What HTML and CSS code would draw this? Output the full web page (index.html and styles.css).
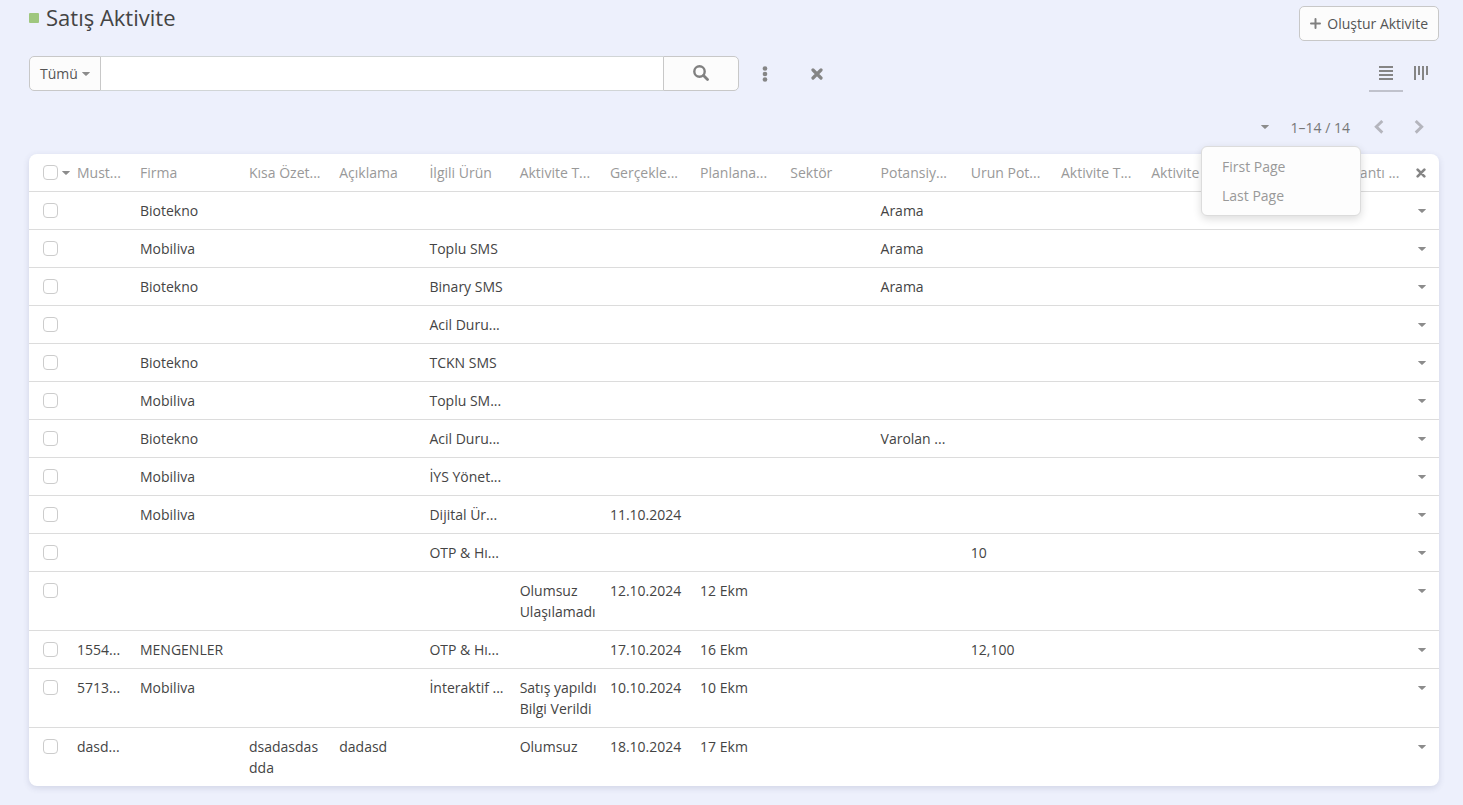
FILE: index.html
```html
<!DOCTYPE html>
<html lang="tr">
<head>
<meta charset="utf-8">
<meta name="viewport" content="width=device-width, initial-scale=1">
<title>Satış Aktivite</title>
<link rel="stylesheet" href="styles.css">
</head>
<body>
<svg class="sprite" aria-hidden="true">
  <symbol id="caret" viewBox="0 0 8 4"><path d="M.5 0h7q.7 0 .3.5L4.6 3.6q-.6.6-1.200 0L.2.5Q-.2 0 .5 0z"/></symbol>
  <symbol id="cross" viewBox="0 0 12 12"><path d="M2 2l8 8M10 2l-8 8" fill="none" stroke="currentColor" stroke-width="3.200" stroke-linecap="round"/></symbol>
</svg>
<main class="page">
  <header class="page-header">
    <h1 class="title"><span class="title-mark"></span>Satış Aktivite</h1>
    <button class="btn create" type="button"><svg width="11" height="11" viewBox="0 0 11 11" aria-hidden="true"><path d="M5.500 1v9M1 5.500h9" fill="none" stroke="#808080" stroke-width="2" stroke-linecap="round"/></svg>Oluştur Aktivite</button>
  </header>

  <div class="search-row">
    <form class="search-group" role="search">
      <button class="btn filter" type="button">Tümü<svg class="caret" aria-hidden="true"><use href="#caret"/></svg></button>
      <input class="search-input" type="text" aria-label="Ara">
      <button class="btn search-btn" type="button" aria-label="Ara"><svg width="16" height="17" viewBox="0 0 16 17" fill="none" stroke="currentColor" aria-hidden="true"><circle cx="6.500" cy="6.500" r="5.200" stroke-width="2.400"/><path d="M10.500 10.500L14.500 14.500" stroke-width="2.800" stroke-linecap="round"/></svg></button>
    </form>
    <button class="icon-btn tool" type="button" aria-label="Menü"><svg width="6" height="16" viewBox="0 0 6 16" fill="currentColor" aria-hidden="true"><circle cx="3" cy="2.500" r="2.300"/><circle cx="3" cy="8" r="2.300"/><circle cx="3" cy="13.500" r="2.300"/></svg></button>
    <button class="icon-btn tool" type="button" aria-label="Temizle"><svg width="12" height="12" aria-hidden="true"><use href="#cross"/></svg></button>
    <div class="views">
      <button class="icon-btn view active" type="button" aria-label="Liste"><svg width="14" height="14" viewBox="0 0 14 14" fill="currentColor" aria-hidden="true"><path d="M0 0h14v2H0zM0 4h14v2H0zM0 8h14v2H0zM0 12h14v2H0z"/></svg></button>
      <button class="icon-btn view" type="button" aria-label="Kanban"><svg width="14" height="14" viewBox="0 0 14 14" fill="currentColor" aria-hidden="true"><path d="M0 0h2v14H0zM4 0h2v9H4zM8 0h2v14H8zM12 0h2v9h-2z"/></svg></button>
    </div>
  </div>

  <nav class="pagination" aria-label="Sayfalama">
    <button class="icon-btn page-menu-btn" type="button" aria-label="Sayfa menüsü"><svg class="caret" aria-hidden="true"><use href="#caret"/></svg></button>
    <span class="page-count">1–14 / 14</span>
    <button class="icon-btn page-step" type="button" aria-label="Önceki"><svg width="10" height="14" viewBox="0 0 10 14" fill="none" stroke="currentColor" stroke-width="2.900" aria-hidden="true"><path d="M8.300 1L2.300 6.800l6 5.800"/></svg></button>
    <button class="icon-btn page-step" type="button" aria-label="Sonraki"><svg width="10" height="14" viewBox="0 0 10 14" fill="none" stroke="currentColor" stroke-width="2.900" aria-hidden="true"><path d="M1.700 1l6 5.800-6 5.800"/></svg></button>
    <ul class="page-menu">
      <li><a href="#first">First Page</a></li>
      <li><a href="#last">Last Page</a></li>
    </ul>
  </nav>

  <div class="panel">
    <table class="list">
      <colgroup><col class="col-check"><col class="col-no"><col class="col-firm"><col span="13"><col class="col-menu"></colgroup>
      <thead>
        <tr><th class="check"><div class="check-all"><input type="checkbox" aria-label="Tümünü seç"><svg class="caret" aria-hidden="true"><use href="#caret"/></svg></div></th><th>Must...</th><th>Firma</th><th>Kısa Özet...</th><th>Açıklama</th><th>İlgili Ürün</th><th>Aktivite T...</th><th>Gerçekle...</th><th>Planlana...</th><th>Sektör</th><th>Potansiy...</th><th>Urun Pot...</th><th>Aktivite T...</th><th>Aktivite</th><th></th><th>Toplantı ...</th><th class="menu"><button class="icon-btn" type="button" aria-label="Sütunlar"><svg width="10" height="10" aria-hidden="true"><use href="#cross"/></svg></button></th></tr>
      </thead>
      <tbody>
        <tr><td class="check"><input type="checkbox" aria-label="Seç"></td><td></td><td>Biotekno</td><td></td><td></td><td></td><td></td><td></td><td></td><td></td><td>Arama</td><td></td><td></td><td></td><td></td><td></td><td class="menu"><button class="icon-btn" type="button" aria-label="Eylemler"><svg class="caret" aria-hidden="true"><use href="#caret"/></svg></button></td></tr>
        <tr><td class="check"><input type="checkbox" aria-label="Seç"></td><td></td><td>Mobiliva</td><td></td><td></td><td>Toplu SMS</td><td></td><td></td><td></td><td></td><td>Arama</td><td></td><td></td><td></td><td></td><td></td><td class="menu"><button class="icon-btn" type="button" aria-label="Eylemler"><svg class="caret" aria-hidden="true"><use href="#caret"/></svg></button></td></tr>
        <tr><td class="check"><input type="checkbox" aria-label="Seç"></td><td></td><td>Biotekno</td><td></td><td></td><td>Binary SMS</td><td></td><td></td><td></td><td></td><td>Arama</td><td></td><td></td><td></td><td></td><td></td><td class="menu"><button class="icon-btn" type="button" aria-label="Eylemler"><svg class="caret" aria-hidden="true"><use href="#caret"/></svg></button></td></tr>
        <tr><td class="check"><input type="checkbox" aria-label="Seç"></td><td></td><td></td><td></td><td></td><td>Acil Duru...</td><td></td><td></td><td></td><td></td><td></td><td></td><td></td><td></td><td></td><td></td><td class="menu"><button class="icon-btn" type="button" aria-label="Eylemler"><svg class="caret" aria-hidden="true"><use href="#caret"/></svg></button></td></tr>
        <tr><td class="check"><input type="checkbox" aria-label="Seç"></td><td></td><td>Biotekno</td><td></td><td></td><td>TCKN SMS</td><td></td><td></td><td></td><td></td><td></td><td></td><td></td><td></td><td></td><td></td><td class="menu"><button class="icon-btn" type="button" aria-label="Eylemler"><svg class="caret" aria-hidden="true"><use href="#caret"/></svg></button></td></tr>
        <tr><td class="check"><input type="checkbox" aria-label="Seç"></td><td></td><td>Mobiliva</td><td></td><td></td><td>Toplu SM...</td><td></td><td></td><td></td><td></td><td></td><td></td><td></td><td></td><td></td><td></td><td class="menu"><button class="icon-btn" type="button" aria-label="Eylemler"><svg class="caret" aria-hidden="true"><use href="#caret"/></svg></button></td></tr>
        <tr><td class="check"><input type="checkbox" aria-label="Seç"></td><td></td><td>Biotekno</td><td></td><td></td><td>Acil Duru...</td><td></td><td></td><td></td><td></td><td>Varolan ...</td><td></td><td></td><td></td><td></td><td></td><td class="menu"><button class="icon-btn" type="button" aria-label="Eylemler"><svg class="caret" aria-hidden="true"><use href="#caret"/></svg></button></td></tr>
        <tr><td class="check"><input type="checkbox" aria-label="Seç"></td><td></td><td>Mobiliva</td><td></td><td></td><td>İYS Yönet...</td><td></td><td></td><td></td><td></td><td></td><td></td><td></td><td></td><td></td><td></td><td class="menu"><button class="icon-btn" type="button" aria-label="Eylemler"><svg class="caret" aria-hidden="true"><use href="#caret"/></svg></button></td></tr>
        <tr><td class="check"><input type="checkbox" aria-label="Seç"></td><td></td><td>Mobiliva</td><td></td><td></td><td>Dijital Ür...</td><td></td><td>11.10.2024</td><td></td><td></td><td></td><td></td><td></td><td></td><td></td><td></td><td class="menu"><button class="icon-btn" type="button" aria-label="Eylemler"><svg class="caret" aria-hidden="true"><use href="#caret"/></svg></button></td></tr>
        <tr><td class="check"><input type="checkbox" aria-label="Seç"></td><td></td><td></td><td></td><td></td><td>OTP &amp; Hı...</td><td></td><td></td><td></td><td></td><td></td><td>10</td><td></td><td></td><td></td><td></td><td class="menu"><button class="icon-btn" type="button" aria-label="Eylemler"><svg class="caret" aria-hidden="true"><use href="#caret"/></svg></button></td></tr>
        <tr><td class="check"><input type="checkbox" aria-label="Seç"></td><td></td><td></td><td></td><td></td><td></td><td>Olumsuz<br>Ulaşılamadı</td><td>12.10.2024</td><td>12 Ekm</td><td></td><td></td><td></td><td></td><td></td><td></td><td></td><td class="menu"><button class="icon-btn" type="button" aria-label="Eylemler"><svg class="caret" aria-hidden="true"><use href="#caret"/></svg></button></td></tr>
        <tr><td class="check"><input type="checkbox" aria-label="Seç"></td><td>1554...</td><td>MENGENLER</td><td></td><td></td><td>OTP &amp; Hı...</td><td></td><td>17.10.2024</td><td>16 Ekm</td><td></td><td></td><td>12,100</td><td></td><td></td><td></td><td></td><td class="menu"><button class="icon-btn" type="button" aria-label="Eylemler"><svg class="caret" aria-hidden="true"><use href="#caret"/></svg></button></td></tr>
        <tr><td class="check"><input type="checkbox" aria-label="Seç"></td><td>5713...</td><td>Mobiliva</td><td></td><td></td><td>İnteraktif ...</td><td>Satış yapıldı<br>Bilgi Verildi</td><td>10.10.2024</td><td>10 Ekm</td><td></td><td></td><td></td><td></td><td></td><td></td><td></td><td class="menu"><button class="icon-btn" type="button" aria-label="Eylemler"><svg class="caret" aria-hidden="true"><use href="#caret"/></svg></button></td></tr>
        <tr><td class="check"><input type="checkbox" aria-label="Seç"></td><td>dasd...</td><td></td><td>dsadasdas<br>dda</td><td>dadasd</td><td></td><td>Olumsuz</td><td>18.10.2024</td><td>17 Ekm</td><td></td><td></td><td></td><td></td><td></td><td></td><td></td><td class="menu"><button class="icon-btn" type="button" aria-label="Eylemler"><svg class="caret" aria-hidden="true"><use href="#caret"/></svg></button></td></tr>
      </tbody>
    </table>
  </div>
</main>
</body>
</html>
```
FILE: styles.css
```css
* { box-sizing: border-box; }

body {
  margin: 0;
  background: #edf0fc;
  color: #444;
  font: 14px/21px "Open Sans", "Noto Sans", sans-serif;
}

button, input { font: inherit; color: inherit; margin: 0; }

.sprite { display: none; }

.caret { width: 8px; height: 4px; fill: #8c8c8c; }

.page { padding: 6px 24px 16px 29px; }

.page-header {
  display: flex;
  justify-content: space-between;
  align-items: flex-start;
}

.title {
  display: flex;
  align-items: center;
  gap: 7px;
  margin: 0;
  font-size: 22px;
  font-weight: 400;
  line-height: 23px;
}

.title-mark {
  width: 10px;
  height: 10px;
  border-radius: 1px;
  background: #9fc77e;
}

.btn {
  display: flex;
  align-items: center;
  justify-content: center;
  height: 35px;
  padding: 0 10px;
  border: 1px solid #c8c8c8;
  border-radius: 5px;
  background: #fcfcfc;
  color: #555;
}

.create { gap: 6px; }

.search-row {
  display: flex;
  align-items: flex-start;
  margin-top: 15px;
}

.search-group {
  display: flex;
  width: calc(50% + 5px);
}

.filter {
  gap: 4px;
  border-radius: 5px 0 0 5px;
}

.search-input {
  flex: 1;
  min-width: 0;
  height: 35px;
  padding: 0 10px;
  border: 1px solid #d1d5d6;
  border-width: 1px 0;
  border-radius: 0;
  background: #fff;
  outline: 0;
}

.search-btn {
  width: 76px;
  border-radius: 0 5px 5px 0;
  color: #808080;
}

.icon-btn {
  display: flex;
  align-items: center;
  justify-content: center;
  padding: 0;
  border: 0;
  background: none;
  color: #858585;
}

.tool { width: 52px; height: 35px; }

.views {
  display: flex;
  gap: 1px;
  margin: 0 1px 0 auto;
}

.view {
  width: 34px;
  height: 36px;
  border-bottom: 2px solid transparent;
}

.active { border-color: #c0c2cc; }

.pagination {
  position: relative;
  display: flex;
  align-items: center;
  justify-content: flex-end;
  height: 62px;
  padding-top: 8px;
}

.page-menu-btn { width: 32px; height: 32px; }

.page-count { margin: 0 9px 0 10px; color: #777; }

.page-step { width: 40px; height: 32px; color: #b4b5bd; }

.page-menu {
  position: absolute;
  top: 54px;
  right: 78px;
  z-index: 1;
  width: 160px;
  margin: 0;
  padding: 5px 0;
  border: 1px solid #dcdcdc;
  border-radius: 6px;
  background: #fdfdfd;
  box-shadow: 0 3px 8px rgba(0, 0, 0, .14);
  list-style: none;
}

.page-menu a {
  display: block;
  padding: 4px 20px;
  color: #999;
  text-decoration: none;
}

.panel {
  border-radius: 8px;
  background: #fff;
  box-shadow: 0 2px 6px rgba(60, 70, 110, .16);
}

.list {
  width: 100%;
  table-layout: fixed;
  border-collapse: separate;
  border-spacing: 0;
}

.col-check { width: 41px; }
.col-no { width: 63px; }
.col-firm { width: 109px; }
.col-menu { width: 24px; }

.list th,
.list td {
  padding: 8px 7px;
  border-bottom: 1px solid #dcdcdc;
  text-align: left;
  vertical-align: top;
  white-space: nowrap;
}

.list th { color: #999; font-weight: 400; }

.list tbody tr:last-child td { border-bottom: 0; }

.list .check { padding: 11px 0 0 14px; }

.check-all { display: flex; align-items: center; gap: 4px; }

.check input {
  display: block;
  flex: none;
  width: 15px;
  height: 15px;
  border: 1px solid #ccc;
  border-radius: 4px;
  background: #fff;
  appearance: none;
}

.list .menu { padding: 8px 13px 8px 0; }

.menu .icon-btn {
  width: 100%;
  height: 21px;
  justify-content: flex-end;
}
```
